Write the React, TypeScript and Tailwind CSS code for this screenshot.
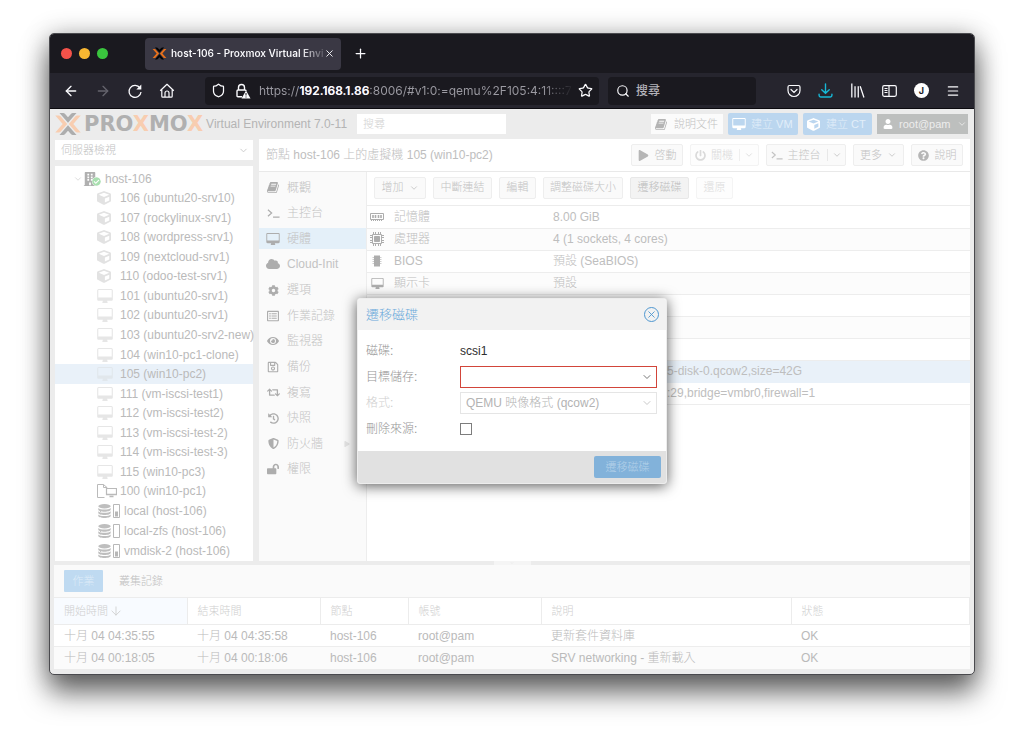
import React from "react";
import {
  FaBuilding,
  FaCheckCircle,
  FaCloud,
  FaCog,
  FaCube,
  FaEye,
  FaHistory,
  FaLockOpen,
  FaPlay,
  FaPowerOff,
  FaQuestionCircle,
  FaRegListAlt,
  FaRegSave,
  FaRetweet,
  FaShieldAlt,
  FaUser,
} from "react-icons/fa";
import {
  ArrowDown,
  ArrowLeft,
  ArrowRight,
  ChevronDown,
  Menu,
  Plus,
  Search,
  Shield,
  Star,
  X,
} from "lucide-react";

type IconProps = { className?: string };

function BookIcon({ className }: IconProps) {
  return (
    <svg viewBox="0 0 1792 1792" fill="currentColor" className={className}>
      <path d="M1639 478q40 57 18 129l-275 906q-19 64-76.500 107.500t-122.500 43.500h-923q-77 0-148.500-53.500t-99.500-131.500q-24-67-2-127 0-4 3-27t4-37q1-8-3-21.500t-3-19.500q2-11 8-21t16.500-23.500 16.500-23.500q23-38 45-91.500t30-91.500q3-10 .5-30t-.5-28q3-11 17-28t17-23q21-36 42-92t25-90q1-9-2.500-32t.5-28q4-13 22-30.500t22-22.500q19-26 42.500-84.500t27.500-96.500q1-8-3-25.500t-2-26.500q2-8 9-18t18-23 17-21q8-12 16.500-30.500t15-35 16-36 19.500-32 26.500-23.500 36-11.500 47.500 5.500l-1 3q38-9 51-9h761q74 0 114 56t18 130l-274 906q-36 119-71.500 153.500t-128.500 34.500h-869q-27 0-38 15-11 16-1 43 24 70 144 70h923q29 0 56-15.500t35-41.500l300-987q7-22 5-57 38 15 59 43zm-1064 2q-4 13 2 22.500t20 9.500h608q13 0 25.500-9.500t16.500-22.500l21-64q4-13-2-22.500t-20-9.500h-608q-13 0-25.500 9.500t-16.500 22.500zm-83 256q-4 13 2 22.500t20 9.500h608q13 0 25.500-9.500t16.500-22.500l21-64q4-13-2-22.500t-20-9.500h-608q-13 0-25.500 9.500t-16.500 22.500z" />
    </svg>
  );
}

function DesktopIcon({ className }: IconProps) {
  return (
    <svg viewBox="0 0 1856 1664" fill="currentColor" className={className}>
      <path d="M1728 992v-832q0-13-9.500-22.500t-22.500-9.500h-1536q-13 0-22.500 9.500t-9.500 22.500v832q0 13 9.500 22.500t22.500 9.500h1536q13 0 22.500-9.500t9.500-22.500zm128-832v1088q0 66-47 113t-113 47h-512q0 37 16 77.500t32 71 16 43.500q0 26-19 45t-45 19h-512q-26 0-45-19t-19-45q0-14 16-44t32-70 16-78h-512q-66 0-113-47t-47-113v-1088q0-66 47-113t113-47h1536q66 0 113 47t47 113z" />
    </svg>
  );
}

function TerminalIcon({ className }: IconProps) {
  return (
    <svg viewBox="0 0 14 12" fill="none" stroke="currentColor" strokeWidth="1.3" className={className}>
      <path d="M1 2.500l4 3.500-4 3.500M6.500 10.500h7" />
    </svg>
  );
}

function MemoryIcon({ className }: IconProps) {
  return (
    <svg viewBox="0 0 14 8" fill="none" stroke="currentColor" className={className}>
      <path d="M.5.5h13v6H.5z" />
      <path d="M3 2v3M5.500 2v3M8.500 2v3M11 2v3" strokeWidth="1.600" />
      <path d="M1 7.500h12" strokeDasharray="1 1" />
    </svg>
  );
}

function CpuIcon({ className }: IconProps) {
  return (
    <svg viewBox="0 0 14 14" fill="none" stroke="currentColor" className={className}>
      <path d="M2.500 2.500h9v9h-9z" />
      <path d="M4.500 4.500h5v5h-5z" fill="currentColor" />
      <path d="M3.500 0v2M5.500 0v2M8.500 0v2M10.500 0v2M3.500 12v2M5.500 12v2M8.500 12v2M10.500 12v2M0 3.500h2M0 5.500h2M0 8.500h2M0 10.500h2M12 3.500h2M12 5.500h2M12 8.500h2M12 10.500h2" />
    </svg>
  );
}

function ChipIcon({ className }: IconProps) {
  return (
    <svg viewBox="0 0 12 12" className={className}>
      <path d="M3 .5h6v11H3z" fill="currentColor" />
      <path d="M1.500 2.500h9M1.500 4.500h9M1.500 6.500h9M1.500 8.500h9" stroke="currentColor" strokeWidth=".6" />
    </svg>
  );
}

function DatabaseIcon({ className }: IconProps) {
  return (
    <svg viewBox="0 0 13 14" fill="currentColor" className={className}>
      <ellipse cx="6.500" cy="2.300" rx="6.200" ry="2.200" />
      <path d="M.3 4c1 1.100 3 1.500 6.200 1.500s5.200-.4 6.200-1.500v1.600c0 1.400-2.700 2.200-6.200 2.200S.3 7 .3 5.600zM.3 7.200c1 1.100 3 1.500 6.200 1.500s5.200-.4 6.200-1.500v1.600c0 1.400-2.700 2.200-6.200 2.200S.3 10.200.3 8.800zM.3 10.400c1 1.100 3 1.500 6.200 1.500s5.200-.4 6.200-1.500v1.400c0 1.400-2.700 2.200-6.200 2.200S.3 13.200.3 11.800z" />
    </svg>
  );
}

function UsageIcon({ level }: { level: number }) {
  return (
    <svg viewBox="0 0 7 14" className="h-[14px] w-[7px] shrink-0">
      <path d="M.5.5h6v13h-6z" fill="none" stroke="currentColor" />
      <rect x="2" y={12.5 - level} width="3" height={level} fill="currentColor" />
    </svg>
  );
}

function TemplateIcon() {
  return (
    <svg viewBox="0 0 20 14" fill="none" stroke="currentColor" className="h-[14px] w-5 shrink-0">
      <path d="M7.500 13.500h-7V.5h6l3.500 3v1M6.500.5v3H10" />
      <path d="M9.500 4.500h10v6h-10z" fill="white" strokeWidth="1.200" />
      <path d="M9 10.500h11M12.500 12.500h4" strokeWidth="1.500" />
    </svg>
  );
}

function ProxmoxMark({ className, dark, accent }: { className?: string; dark: string; accent: string }) {
  return (
    <svg viewBox="0 0 26 24" className={className}>
      <path d="M4.500 1h3.700q1 0 1.700.8L13 5.300l3.100-3.500q.7-.8 1.700-.8h3.700L13 10.800zM4.500 23h3.700q1 0 1.700-.8l3.100-3.500 3.100 3.500q.7.8 1.700.8h3.700L13 13.200z" fill={dark} />
      <path d="M.3 3.500h3.500q1 0 1.700.8l6.700 7.700-6.700 7.700q-.7.8-1.700.8H.3L7.700 12zM25.700 3.500h-3.500q-1 0-1.700.8L13.800 12l6.700 7.700q.7.8 1.700.8h3.500L18.300 12z" fill={accent} />
    </svg>
  );
}

function BrowserChrome() {
  return (
    <header className="font-['Inter','Noto_Sans_CJK_TC',sans-serif] text-[#fbfbfe]">
      <div className="flex h-[39px] items-center bg-[#1a191f] pl-[11px]">
        <div className="flex w-[84px] gap-[7px]">
          <button aria-label="Close window" className="size-[11px] rounded-full bg-[#f4524a]" />
          <button aria-label="Minimise window" className="size-[11px] rounded-full bg-[#f8b732]" />
          <button aria-label="Zoom window" className="size-[11px] rounded-full bg-[#3ac53e]" />
        </div>
        <div className="flex h-8 w-[196px] items-center rounded bg-[#3a3844] pl-[7px] pr-2">
          <ProxmoxMark className="h-[13px] w-[15px] shrink-0" dark="#050505" accent="#e8701a" />
          <span className="ml-1 flex-1 whitespace-nowrap bg-linear-to-r from-[#fbfbfe] from-85% to-[#5a5863] bg-clip-text text-[10px] font-semibold text-transparent">
            host-106 - Proxmox Virtual Envi
          </span>
          <button aria-label="Close tab">
            <X className="size-[11px]" strokeWidth={2} />
          </button>
        </div>
        <button aria-label="New tab" className="ml-3">
          <Plus className="size-[15px]" strokeWidth={2} />
        </button>
      </div>
      <div className="flex h-9 items-center border-b border-[#0c0b10] bg-[#26252e] pl-[13px] pr-[14px]">
        <div className="flex w-[142px] items-center gap-4">
          <button aria-label="Back"><ArrowLeft className="size-4" strokeWidth={2} /></button>
          <button aria-label="Forward"><ArrowRight className="size-4 text-[#65646d]" strokeWidth={2} /></button>
          <button aria-label="Reload">
            <svg viewBox="0 0 16 16" fill="none" stroke="currentColor" strokeWidth="1.300" className="size-4">
              <path d="M13 5A6 6 0 1 0 14 9" />
              <path d="M14.300 1.500v5h-5z" fill="currentColor" stroke="none" />
            </svg>
          </button>
          <button aria-label="Home">
            <svg viewBox="0 0 16 16" fill="none" stroke="currentColor" strokeWidth="1.200" strokeLinejoin="round" className="size-4">
              <path d="M1.200 7.700L8 1.300l6.800 6.400M2.800 6.500v6.700q0 1 1 1h8.400q1 0 1-1V6.500" />
              <path d="M6 14v-4a2 2 0 0 1 4 0v4" />
            </svg>
          </button>
        </div>
        <div className="flex h-[28px] w-[394px] items-center rounded bg-[#1a191f] px-[6px]">
          <Shield className="size-[15px] shrink-0" strokeWidth={2} />
          <svg viewBox="0 0 16 16" fill="none" stroke="currentColor" strokeWidth="1.400" className="ml-[9px] size-4 shrink-0">
            <path d="M7 13.800H3q-1 0-1-1V8q0-1 1-1h7q1 0 1 1M3.500 7V4.500a3 3 0 0 1 6 0V7" />
            <path d="M11 7.500l4.500 8h-9z" fill="currentColor" stroke="none" />
            <path d="M11 10v2.500M11 13.500v1" stroke="#1a191f" strokeWidth="1" />
          </svg>
          <a
            href="#address"
            className="ml-2 min-w-0 flex-1 overflow-hidden whitespace-nowrap bg-linear-to-r from-[#9c9ba3] from-90% to-[#1a191f] bg-clip-text text-[12px] text-transparent"
          >
            https://<strong className="font-semibold text-[#fbfbfe]">192.168.1.86</strong>:8006/#v1:0:=qemu%2F105:4:11::::7
          </a>
          <button aria-label="Bookmark" className="ml-1">
            <Star className="size-[15px]" strokeWidth={2} />
          </button>
        </div>
        <label className="ml-[9px] flex h-[28px] w-[148px] items-center rounded bg-[#1a191f] pl-2">
          <Search className="size-[14px] shrink-0" strokeWidth={2} />
          <input
            aria-label="搜尋"
            placeholder="搜尋"
            className="ml-[6px] w-full bg-transparent text-[12px] font-medium outline-none placeholder:text-[#b3b2b9]"
          />
        </label>
        <div className="ml-auto flex items-center gap-[17px]">
          <button aria-label="Pocket">
            <svg viewBox="0 0 14 14" fill="none" stroke="currentColor" strokeWidth="1.200" strokeLinecap="round" className="size-[14px]">
              <path d="M2.500 1.500h9q1.500 0 1.500 1.500v3.500a6 6 0 0 1-12 0V3q0-1.500 1.500-1.500z" />
              <path d="M4 5.500l3 3 3-3" />
            </svg>
          </button>
          <button aria-label="Downloads" className="text-[#16b8d6]">
            <svg viewBox="0 0 14 14" fill="none" stroke="currentColor" strokeWidth="1.300" strokeLinecap="round" className="size-[15px]">
              <path d="M7 .8v8.700M3.500 6.200L7 9.600l3.500-3.400M1 10.500v1q0 1.500 1.500 1.500h9q1.500 0 1.500-1.500v-1" />
            </svg>
          </button>
          <button aria-label="Library">
            <svg viewBox="0 0 14 14" fill="none" stroke="currentColor" strokeWidth="1.200" className="size-[15px]">
              <path d="M1.700.5v13M4.700 3v10.500M7.700 3v10.500M9.500 3l3.500 10.500" />
            </svg>
          </button>
          <button aria-label="Sidebars">
            <svg viewBox="0 0 15 12" fill="none" stroke="currentColor" strokeWidth="1.200" className="h-3 w-[15px]">
              <rect x=".7" y=".7" width="13.600" height="10.600" rx="1.500" />
              <path d="M7 1v10M2.500 3.500h3M2.500 5.500h3M2.500 7.500h3" />
            </svg>
          </button>
          <button aria-label="Account" className="flex size-[15px] items-center justify-center rounded-full bg-white text-[9px] font-bold text-[#1a191f]">
            J
          </button>
          <button aria-label="Menu"><Menu className="size-[14px]" strokeWidth={2} /></button>
        </div>
      </div>
    </header>
  );
}

function PageHeader() {
  return (
    <div className="flex h-[30px] items-center pl-[5px] pr-[6px] text-[12px]">
      <ProxmoxMark className="h-6 w-[26px] shrink-0" dark="#adadad" accent="#f8cdb0" />
      <span className="ml-[3px] font-['DejaVu_Sans',sans-serif] text-[21px] leading-6 font-bold text-[#b0b0b0]">
        PRO<span className="text-[#f8cdb0]">X</span>MO<span className="text-[#f8cdb0]">X</span>
      </span>
      <span className="ml-[3px] whitespace-nowrap text-[12px] text-[#b4b4b4]">Virtual Environment 7.0-11</span>
      <input
        aria-label="搜尋"
        placeholder="搜尋"
        className="ml-[10px] h-5 w-[149px] bg-white px-[6px] text-[11px] outline-none placeholder:text-[#d2d2d2]"
      />
      <div className="ml-auto flex items-center gap-[5px] text-[11px] whitespace-nowrap">
        <button className="flex h-5 w-[72px] items-center gap-[6px] bg-[#fbfbfb] pl-1 text-[#c2c2c2]">
          <BookIcon className="size-[13px] text-[#b4b4b4]" />說明文件
        </button>
        <button className="flex h-[22px] w-[70px] items-center gap-[5px] rounded-[2px] bg-[#bbd6ef] pl-1 text-[#e2eef9]">
          <DesktopIcon className="h-3 w-[14px] text-white" />建立 VM
        </button>
        <button className="flex h-[22px] w-[69px] items-center gap-[6px] rounded-[2px] bg-[#bbd6ef] pl-1 text-[#e2eef9]">
          <FaCube className="size-[13px] text-white" />建立 CT
        </button>
        <button className="flex h-5 w-[91px] items-center gap-[6px] bg-[#bdbfbe] pl-[6px] text-[#ededed]">
          <FaUser className="size-[10px] text-white" />root@pam
          <ChevronDown className="size-[10px]" strokeWidth={2} />
        </button>
      </div>
    </div>
  );
}

const guests: { kind: "ct" | "vm" | "template"; label: string; selected?: boolean }[] = [
  { kind: "ct", label: "106 (ubuntu20-srv10)" },
  { kind: "ct", label: "107 (rockylinux-srv1)" },
  { kind: "ct", label: "108 (wordpress-srv1)" },
  { kind: "ct", label: "109 (nextcloud-srv1)" },
  { kind: "ct", label: "110 (odoo-test-srv1)" },
  { kind: "vm", label: "101 (ubuntu20-srv1)" },
  { kind: "vm", label: "102 (ubuntu20-srv1)" },
  { kind: "vm", label: "103 (ubuntu20-srv2-new)" },
  { kind: "vm", label: "104 (win10-pc1-clone)" },
  { kind: "vm", label: "105 (win10-pc2)", selected: true },
  { kind: "vm", label: "111 (vm-iscsi-test1)" },
  { kind: "vm", label: "112 (vm-iscsi-test2)" },
  { kind: "vm", label: "113 (vm-iscsi-test-2)" },
  { kind: "vm", label: "114 (vm-iscsi-test-3)" },
  { kind: "vm", label: "115 (win10-pc3)" },
  { kind: "template", label: "100 (win10-pc1)" },
];

const storages = [
  { label: "local (host-106)", level: 5 },
  { label: "local-zfs (host-106)", level: 0 },
  { label: "vmdisk-2 (host-106)", level: 5 },
];

function ResourceTree() {
  return (
    <nav className="flex w-[198px] shrink-0 flex-col gap-[6px]">
      <label className="relative block">
        <select
          aria-label="檢視"
          className="block h-5 w-full appearance-none bg-white pl-[6px] text-[11px] text-[#c2c2c2] outline-none"
        >
          <option>伺服器檢視</option>
        </select>
        <ChevronDown className="pointer-events-none absolute top-[5px] right-1 size-[11px] text-[#c8c8c8]" strokeWidth={2} />
      </label>
      <div className="flex-1 bg-white pt-[3px] text-[12px] text-[#bababa]">
        <ul className="flex h-[332px] flex-col">
          <li className="flex flex-1 items-center pl-[18px]">
            <ChevronDown className="size-[10px] text-[#c8c8c8]" strokeWidth={1.5} />
            <span className="relative block h-[14px] w-[17px]">
              <FaBuilding className="size-[14px] text-[#b0b0b0]" />
              <FaCheckCircle className="absolute -right-px bottom-0 size-[9px] rounded-full bg-white text-[#a9dfb0]" />
            </span>
            <span className="ml-[5px]">host-106</span>
          </li>
          {guests.map((g) => (
            <li
              key={g.label}
              className={
                g.selected
                  ? "flex flex-1 items-center bg-[#e9f1f9] pl-[42px]"
                  : "flex flex-1 items-center pl-[42px]"
              }
            >
              <span className="flex w-[23px] shrink-0 items-center">
                {g.kind === "ct" && <FaCube className="size-[14px] text-[#e2e2e2]" />}
                {g.kind === "vm" && (
                  <DesktopIcon className={g.selected ? "h-[14px] w-4 text-[#e1e7ec]" : "h-[14px] w-4 text-[#e6e6e6]"} />
                )}
                {g.kind === "template" && <TemplateIcon />}
              </span>
              <span className="whitespace-nowrap">{g.label}</span>
            </li>
          ))}
        </ul>
        <ul>
          {storages.map((s) => (
            <li key={s.label} className="flex h-5 items-center pl-[43px]">
              <DatabaseIcon className="h-[14px] w-[13px] shrink-0 text-[#bebebe]" />
              <span className="ml-[2px] text-[#b8b8b8]"><UsageIcon level={s.level} /></span>
              <span className="ml-1 whitespace-nowrap">{s.label}</span>
            </li>
          ))}
        </ul>
      </div>
    </nav>
  );
}

const menu: { icon: React.ReactNode; label: string; selected?: boolean; more?: boolean }[] = [
  { icon: <BookIcon className="size-[13px]" />, label: "概觀" },
  { icon: <TerminalIcon className="h-3 w-[13px]" />, label: "主控台" },
  { icon: <DesktopIcon className="h-3 w-[14px]" />, label: "硬體", selected: true },
  { icon: <FaCloud className="size-[14px]" />, label: "Cloud-Init" },
  { icon: <FaCog className="size-[11px]" />, label: "選項" },
  { icon: <FaRegListAlt className="size-[12px]" />, label: "作業記錄" },
  { icon: <FaEye className="size-[12px]" />, label: "監視器" },
  { icon: <FaRegSave className="size-[12px]" />, label: "備份" },
  { icon: <FaRetweet className="size-[13px]" />, label: "複寫" },
  { icon: <FaHistory className="size-[11px]" />, label: "快照" },
  { icon: <FaShieldAlt className="size-[11px]" />, label: "防火牆", more: true },
  { icon: <FaLockOpen className="size-[12px]" />, label: "權限" },
];

function SideMenu() {
  return (
    <nav className="w-[108px] shrink-0 border-r border-[#ededed] bg-[#fafafa] pt-[5px]">
      <ul className="flex h-[303px] flex-col justify-between">
        {menu.map((m) => (
          <li key={m.label} className={m.selected ? "bg-[#e4f0f9]" : ""}>
            <a href="#panel" className="flex h-[21px] items-center pr-4 text-[12px] text-[#c3c3c3]">
              <span className="flex w-7 justify-center text-[#adadad]">{m.icon}</span>
              <span>{m.label}</span>
              {m.more && <FaPlay className="ml-auto size-[6px] text-[#e4e4e4]" />}
            </a>
          </li>
        ))}
      </ul>
    </nav>
  );
}

const hardware: { icon?: React.ReactNode; label?: string; value?: string; selected?: boolean }[] = [
  { icon: <MemoryIcon className="h-2 w-[14px]" />, label: "記憶體", value: "8.00 GiB" },
  { icon: <CpuIcon className="size-[14px]" />, label: "處理器", value: "4 (1 sockets, 4 cores)" },
  { icon: <ChipIcon className="size-3" />, label: "BIOS", value: "預設 (SeaBIOS)" },
  { icon: <DesktopIcon className="h-[11px] w-[13px]" />, label: "顯示卡", value: "預設" },
  {},
  {},
  {},
  { value: "5-disk-0.qcow2,size=42G", selected: true },
  { value: ":29,bridge=vmbr0,firewall=1" },
];

function ToolButton({ width, tone, children }: { width: string; tone?: string; children: React.ReactNode }) {
  return (
    <button
      className={`flex h-[22px] items-center justify-center whitespace-nowrap rounded-[2px] border text-[11px] ${width} ${
        tone ?? "border-[#eeeeee] bg-[#fafafa] text-[#c3c3c3]"
      }`}
    >
      {children}
    </button>
  );
}

function HardwarePanel() {
  return (
    <section className="min-w-0 flex-1">
      <div className="flex h-[34px] items-center gap-[7px] border-b border-[#ececec] px-[7px] pb-[2px]">
        <ToolButton width="w-[52px] gap-[5px]">
          增加 <ChevronDown className="size-[10px]" strokeWidth={2} />
        </ToolButton>
        <ToolButton width="w-[59px]">中斷連結</ToolButton>
        <ToolButton width="w-[37px]">編輯</ToolButton>
        <ToolButton width="w-[80px]">調整磁碟大小</ToolButton>
        <ToolButton width="w-[59px]" tone="border-[#e8e8e8] bg-[#f3f3f3] text-[#bdbdbd]">遷移磁碟</ToolButton>
        <ToolButton width="w-[37px]" tone="border-[#f4f4f4] bg-[#fdfdfd] text-[#dcdcdc]">還原</ToolButton>
      </div>
      <table className="w-full table-fixed border-collapse text-left text-[12px] text-[#bebebe]">
        <colgroup>
          <col className="w-[27px]" />
          <col className="w-[159px]" />
          <col />
        </colgroup>
        <tbody>
          {hardware.map((h, i) => (
            <tr
              key={i}
              className={
                h.selected
                  ? "h-[22px] border-b border-[#e9f1f9] bg-[#e9f1f9]"
                  : "h-[22px] border-b border-[#ededed] odd:bg-white even:bg-[#fcfcfc]"
              }
            >
              <td className="text-[#adadad]">
                <span className="flex w-5 justify-center">{h.icon}</span>
              </td>
              <td className="leading-4">{h.label}</td>
              <td className={h.label ? "leading-4" : "pl-[114px] leading-4"}>{h.value}</td>
            </tr>
          ))}
        </tbody>
      </table>
    </section>
  );
}

function GuestTitleBar() {
  return (
    <div className="flex h-[33px] items-center gap-[7px] border-b border-[#e9e9e9] pr-[7px] pl-[7px]">
      <h1 className="mr-auto whitespace-nowrap text-[12px] text-[#bebebe]">節點 host-106 上的虛擬機 105 (win10-pc2)</h1>
      <ToolButton width="w-[52px] gap-[6px]">
        <FaPlay className="size-[11px] text-[#b6b6b6]" /> 啓動
      </ToolButton>
      <ToolButton width="w-[69px] gap-[5px]" tone="border-[#f3f3f3] bg-[#fdfdfd] text-[#dadada]">
        <FaPowerOff className="size-[11px]" /> 關機
        <span className="ml-px flex h-3 items-center border-l border-[#efefef] pl-1">
          <ChevronDown className="size-[10px]" strokeWidth={2} />
        </span>
      </ToolButton>
      <ToolButton width="w-[80px] gap-[5px]">
        <TerminalIcon className="h-3 w-3" /> 主控台
        <span className="ml-px flex h-3 items-center border-l border-[#e8e8e8] pl-1">
          <ChevronDown className="size-[10px]" strokeWidth={2} />
        </span>
      </ToolButton>
      <ToolButton width="w-[51px] gap-[5px]">
        更多 <ChevronDown className="size-[10px]" strokeWidth={2} />
      </ToolButton>
      <ToolButton width="w-[52px] gap-[6px]">
        <FaQuestionCircle className="size-[11px] text-[#b6b6b6]" /> 說明
      </ToolButton>
    </div>
  );
}

const tasks = [
  ["十月 04 04:35:55", "十月 04 04:35:58", "host-106", "root@pam", "更新套件資料庫", "OK"],
  ["十月 04 00:18:05", "十月 04 00:18:06", "host-106", "root@pam", "SRV networking - 重新載入", "OK"],
];

function TaskLog() {
  return (
    <section className="bg-[#fafafa]">
      <div role="tablist" className="flex h-8 items-center gap-2 px-[10px] text-[12px]">
        <button role="tab" aria-selected="true" className="h-[22px] w-[39px] rounded-[1px] bg-[#bfdaf1] text-[11px] text-[#deecf8]">作業</button>
        <button role="tab" aria-selected="false" className="h-[22px] px-2 text-[11px] text-[#c0c0c0]">叢集記錄</button>
      </div>
      <table className="w-full table-fixed border-collapse bg-white text-left text-[12px] text-[#bababa]">
        <colgroup>
          <col className="w-[133px]" />
          <col className="w-[133px]" />
          <col className="w-[88px]" />
          <col className="w-[133px]" />
          <col className="w-[250px]" />
          <col />
        </colgroup>
        <thead>
          <tr className="h-[27px] border-y border-[#ececec] text-[11px] text-[#cfcfcf]">
            <th className="border-r border-[#ececec] bg-[#f8fbff] pl-[10px] font-light">
              <span className="flex items-center gap-px">
                開始時間 <ArrowDown className="size-[14px]" strokeWidth={1.5} />
              </span>
            </th>
            {["結束時間", "節點", "帳號", "說明", "狀態"].map((h) => (
              <th key={h} className="border-r border-[#ececec] pl-[10px] font-light">{h}</th>
            ))}
          </tr>
        </thead>
        <tbody>
          {tasks.map((row, i) => (
            <tr key={i} className="h-[22px] border-b border-[#ededed] odd:bg-white even:bg-[#fbfbfb] last:border-0">
              {row.map((cell, j) => (
                <td key={j} className="whitespace-nowrap pl-[10px] leading-4">{cell}</td>
              ))}
            </tr>
          ))}
        </tbody>
      </table>
    </section>
  );
}

function MoveDiskDialog() {
  return (
    <div
      role="dialog"
      aria-labelledby="move-disk-title"
      className="w-[310px] overflow-hidden rounded-[3px] border border-[#ededed] bg-white text-[12px] text-[#969696] shadow-[0_2px_14px_rgba(0,0,0,0.65)]"
    >
      <div className="flex h-[31px] items-center justify-between bg-[#f2f2f2] pr-[7px] pl-2">
        <h2 id="move-disk-title" className="text-[13px] text-[#6aa9db]">遷移磁碟</h2>
        <button aria-label="關閉" className="flex size-[15px] items-center justify-center rounded-full border border-[#4f97d0] text-[#4f97d0]">
          <X className="size-[11px]" strokeWidth={2} />
        </button>
      </div>
      <form className="grid auto-rows-[21px] grid-cols-[94px_1fr] items-center gap-y-[5px] pt-[10px] pr-[9px] pb-[12px] pl-2">
        <span>磁碟:</span>
        <span className="text-[#2e2e2e]">scsi1</span>
        <label htmlFor="target">目標儲存:</label>
        <div className="relative">
          <select id="target" className="block h-[22px] w-full appearance-none border border-[#d2453a] bg-white px-[5px] outline-none" />
          <ChevronDown className="pointer-events-none absolute top-[5px] right-1 size-3 text-[#777]" strokeWidth={2} />
        </div>
        <label htmlFor="format" className="text-[#cfcfcf]">格式:</label>
        <div className="relative">
          <select
            id="format"
            disabled
            className="block h-[22px] w-full appearance-none border border-[#e5e5e5] bg-white px-[5px] text-[#b3b3b3] opacity-100 outline-none"
          >
            <option>QEMU 映像格式 (qcow2)</option>
          </select>
          <ChevronDown className="pointer-events-none absolute top-[5px] right-1 size-3 text-[#c9c9c9]" strokeWidth={2} />
        </div>
        <label htmlFor="delete-source">刪除來源:</label>
        <input id="delete-source" type="checkbox" className="size-3 appearance-none border border-[#7d7d7d] bg-white" />
      </form>
      <div className="flex h-8 items-center justify-end bg-[#e1e1e1] pr-[5px]">
        <button className="h-[22px] w-[67px] rounded-[2px] bg-[#82b2da] text-[11px] text-[#b4d1e9]">遷移磁碟</button>
      </div>
    </div>
  );
}

export default function App() {
  return (
    <div className="bg-white px-[49px] pt-[33px] pb-[64px]">
      <div className="overflow-hidden rounded-[5px] border border-[#4a4a4e] bg-[#ececec] shadow-[0_18px_28px_rgba(0,0,0,0.55),0_2px_26px_rgba(0,0,0,0.3)]">
        <BrowserChrome />
        <main className="relative pb-[5px] font-['Liberation_Sans','Noto_Sans_CJK_TC',sans-serif] font-light">
          <PageHeader />
          <div className="flex gap-[6px] pr-1 pl-[5px]">
            <div className="flex pt-px"><ResourceTree /></div>
            <div className="flex min-w-0 flex-1 flex-col bg-white">
              <GuestTitleBar />
              <div className="flex flex-1">
                <SideMenu />
                <HardwarePanel />
              </div>
            </div>
          </div>
          <div className="flex h-1 items-center justify-center">
            <div className="flex h-1 w-[37px] items-center justify-center bg-[#f5f5f5]">
              <ChevronDown className="h-1 w-2 text-[#dcdcdc]" />
            </div>
          </div>
          <div className="pr-1 pl-1"><TaskLog /></div>
          <div className="absolute inset-0 flex items-center justify-center">
            <MoveDiskDialog />
          </div>
        </main>
      </div>
    </div>
  );
}
